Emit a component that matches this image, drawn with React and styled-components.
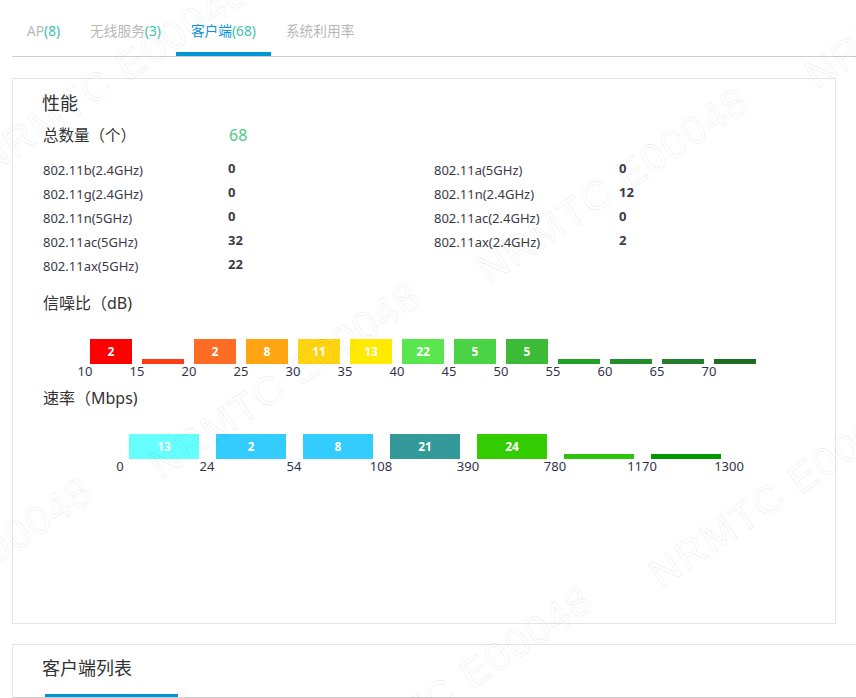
import React from "react";
import styled, { createGlobalStyle } from "styled-components";

const GlobalStyle = createGlobalStyle`
  html, body {
    margin: 0;
    padding: 0;
    background: #fff;
    overflow: hidden;
  }
  body {
    font-family: "Noto Sans", "Noto Sans CJK SC", sans-serif;
    color: #333;
  }
`;

const Page = styled.div`
  position: relative;
  width: 900px;
  height: 698px;
  padding-left: 12px;
  overflow: hidden;
`;

const TabBar = styled.div`
  display: flex;
  height: 56px;
  border-bottom: 1px solid #cfcfcf;
`;

const Tab = styled.div`
  display: flex;
  align-items: center;
  padding: 4px 15px 0;
  font-size: 13.7px;
  color: ${(p) => (p.$active ? "#0a96d6" : "#b8b8b8")};
  box-shadow: ${(p) => (p.$active ? "inset 0 -4px 0 #0096d6" : "none")};

  span {
    color: #3dbfae;
  }
`;

const Card = styled.div`
  box-sizing: border-box;
  margin-top: 21px;
  width: 824px;
  height: 546px;
  border: 1px solid #e5e5e5;
  padding: 13px 0 0 29px;
`;

const Title = styled.div`
  font-size: 18px;
  line-height: 22px;
  color: #333;
`;

const TotalRow = styled.div`
  display: flex;
  align-items: center;
  margin-top: 10px;
  line-height: 22px;
`;

const TotalLabel = styled.div`
  width: 186px;
  font-size: 15.5px;
  padding-left: 1px;
`;

const TotalValue = styled.div`
  font-size: 16px;
  color: #4cc985;
`;

const ModeGrid = styled.div`
  display: grid;
  grid-template-columns: 391px 391px;
  grid-template-rows: repeat(5, 24px);
  grid-auto-flow: column;
  margin-top: 12px;
  padding-left: 1px;
`;

const ModeItem = styled.div`
  display: flex;
  align-items: flex-start;
`;

const ModeLabel = styled.div`
  width: 185px;
  font-size: 13px;
  line-height: 24px;
  color: #3b3b48;
`;

const ModeValue = styled.div`
  font-size: 13px;
  line-height: 20px;
  font-weight: 700;
  color: #3b3b48;
`;

const SubTitle = styled.div`
  font-size: 16px;
  line-height: 22px;
  margin-top: ${(p) => p.$top}px;
  padding-left: 1px;
`;

const Chart = styled.div`
  margin-top: ${(p) => p.$top}px;
`;

const BarRow = styled.div`
  display: flex;
  align-items: flex-end;
  height: 25px;
  padding-left: ${(p) => p.$offset}px;
`;

const BarCell = styled.div`
  box-sizing: border-box;
  width: ${(p) => p.$cell}px;
  padding-left: ${(p) => p.$pad}px;
  flex-shrink: 0;
`;

const Bar = styled.div`
  width: ${(p) => p.$width}px;
  height: ${(p) => (p.$value ? 25 : 5)}px;
  background: ${(p) => p.$color};
  color: #fff;
  font-size: 12px;
  font-weight: 700;
  line-height: 25px;
  text-align: center;
`;

const AxisRow = styled.div`
  display: flex;
  margin-left: ${(p) => p.$offset}px;
`;

const AxisLabel = styled.div`
  width: ${(p) => p.$cell}px;
  flex-shrink: 0;
  text-align: center;
  font-size: 13px;
  line-height: 15px;
  color: #33334a;
`;

const ListCard = styled.div`
  box-sizing: border-box;
  margin-top: 20px;
  width: 900px;
  border: 1px solid #e5e5e5;
  border-right: none;
  padding-top: 12px;
`;

const ListTitle = styled(Title)`
  padding-left: 29px;
`;

const ListTabs = styled.div`
  display: flex;
  padding-left: 32px;
  height: 18px;
  border-bottom: 1px solid #cfcfcf;
`;

const ListTab = styled.div`
  width: 133px;
  box-shadow: inset 0 -3px 0 #0096d6;
`;

const Watermarks = styled.div`
  position: absolute;
  inset: 0;
  pointer-events: none;
`;

const Mark = styled.div`
  position: absolute;
  left: ${(p) => p.$x}px;
  top: ${(p) => p.$y}px;
  transform: translate(-50%, -50%) rotate(-34deg);
  white-space: nowrap;
  font-family: "Liberation Sans", sans-serif;
  font-size: 40px;
  letter-spacing: 2px;
  color: transparent;
  -webkit-text-stroke: 1px rgba(0, 0, 0, 0.07);
`;

const tabs = [
  { name: "AP", count: 8 },
  { name: "无线服务", count: 3 },
  { name: "客户端", count: 68, active: true },
  { name: "系统利用率" },
];

const modes = [
  ["802.11b(2.4GHz)", 0],
  ["802.11g(2.4GHz)", 0],
  ["802.11n(5GHz)", 0],
  ["802.11ac(5GHz)", 32],
  ["802.11ax(5GHz)", 22],
  ["802.11a(5GHz)", 0],
  ["802.11n(2.4GHz)", 12],
  ["802.11ac(2.4GHz)", 0],
  ["802.11ax(2.4GHz)", 2],
];

const snr = [
  [2, "#ff0000"],
  [0, "#ff3a14"],
  [2, "#ff6d24"],
  [8, "#ffa514"],
  [11, "#ffd411"],
  [13, "#ffea00"],
  [22, "#5ae64e"],
  [5, "#4ad345"],
  [5, "#3dbb37"],
  [0, "#22a02a"],
  [0, "#228f2b"],
  [0, "#237f2b"],
  [0, "#1e6b24"],
];
const snrAxis = [10, 15, 20, 25, 30, 35, 40, 45, 50, 55, 60, 65, 70];

const rate = [
  [13, "#66ffff"],
  [2, "#33ccff"],
  [8, "#33ccff"],
  [21, "#339999"],
  [24, "#33cc00"],
  [0, "#2ec40c"],
  [0, "#009900"],
];
const rateAxis = [0, 24, 54, 108, 390, 780, 1170, 1300];

// watermark tiling, centres in page px
const marks = [
  [113, 76],
  [285, 380],
  [457, 684],
  [-43, 575],
  [613, 185],
  [785, 489],
  [941, -10],
];

const BarChart = ({ data, axis, cell, pad, width, offset, top }) => (
  <Chart $top={top}>
    <BarRow $offset={offset}>
      {data.map(([value, color], i) => (
        <BarCell key={i} $cell={cell} $pad={pad}>
          <Bar $width={width} $value={value} $color={color}>
            {value ? value : ""}
          </Bar>
        </BarCell>
      ))}
    </BarRow>
    <AxisRow $offset={offset - cell / 2}>
      {axis.map((a) => (
        <AxisLabel key={a} $cell={cell}>
          {a}
        </AxisLabel>
      ))}
    </AxisRow>
  </Chart>
);

const App = () => {
  return (
    <>
      <GlobalStyle />
      <Page>
        <TabBar>
          {tabs.map((t) => (
            <Tab key={t.name} $active={t.active}>
              {t.name}
              {t.count !== undefined && <span>({t.count})</span>}
            </Tab>
          ))}
        </TabBar>

        <Card>
          <Title>性能</Title>
          <TotalRow>
            <TotalLabel>总数量（个）</TotalLabel>
            <TotalValue>68</TotalValue>
          </TotalRow>

          <ModeGrid>
            {modes.map(([label, value]) => (
              <ModeItem key={label}>
                <ModeLabel>{label}</ModeLabel>
                <ModeValue>{value}</ModeValue>
              </ModeItem>
            ))}
          </ModeGrid>

          <SubTitle $top={14}>信噪比（dB)</SubTitle>
          <BarChart data={snr} axis={snrAxis} cell={52} pad={5} width={42} offset={43} top={25} />

          <SubTitle $top={8}>速率（Mbps)</SubTitle>
          <BarChart data={rate} axis={rateAxis} cell={87} pad={9} width={70} offset={78} top={25} />
        </Card>

        <ListCard>
          <ListTitle>客户端列表</ListTitle>
          <ListTabs>
            <ListTab />
          </ListTabs>
        </ListCard>

        <Watermarks aria-hidden="true">
          {marks.map(([x, y], i) => (
            <Mark key={i} $x={x} $y={y}>
              NRMTC E00048
            </Mark>
          ))}
        </Watermarks>
      </Page>
    </>
  );
};

export default App;
